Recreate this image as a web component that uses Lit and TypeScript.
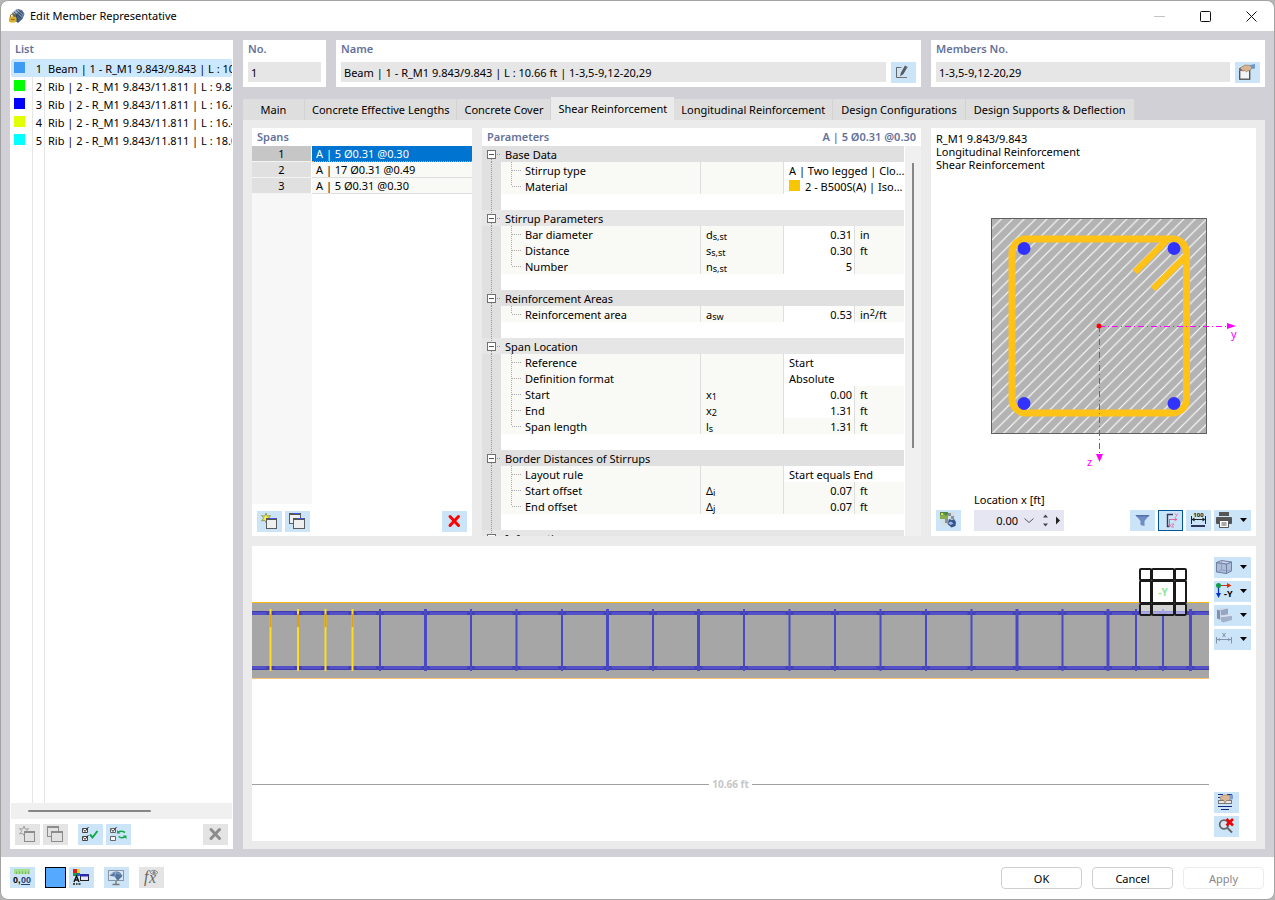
import { LitElement, html, css, svg, nothing } from "lit";
import { customElement, state } from "lit/decorators.js";
import { classMap } from "lit/directives/class-map.js";

interface ListItem { no: number; color: string; text: string; }
interface ParamRow {
  name: string;
  symbol?: string;
  sub?: string;
  value: string;
  unit?: string;
  sup?: string;
  unitTail?: string;
  numeric?: boolean;
  readonly?: boolean;
  swatch?: string;
}
interface ParamGroup { title: string; rows: ParamRow[]; }

const ITEMS: ListItem[] = [
  { no: 1, color: "#3d9af5", text: "Beam | 1 - R_M1 9.843/9.843 | L : 10.66 ft | 1-3,5-9,12-20,29" },
  { no: 2, color: "#00ff00", text: "Rib | 2 - R_M1 9.843/11.811 | L : 9.84 ft" },
  { no: 3, color: "#0000ff", text: "Rib | 2 - R_M1 9.843/11.811 | L : 16.40 ft" },
  { no: 4, color: "#e1ff00", text: "Rib | 2 - R_M1 9.843/11.811 | L : 16.40 ft" },
  { no: 5, color: "#00ffff", text: "Rib | 2 - R_M1 9.843/11.811 | L : 18.04 ft" },
];

const SPANS = ["A | 5 Ø0.31 @0.30", "A | 17 Ø0.31 @0.49", "A | 5 Ø0.31 @0.30"];

const TABS = [
  "Main",
  "Concrete Effective Lengths",
  "Concrete Cover",
  "Shear Reinforcement",
  "Longitudinal Reinforcement",
  "Design Configurations",
  "Design Supports & Deflection",
];

const GROUPS: ParamGroup[] = [
  { title: "Base Data", rows: [
    { name: "Stirrup type", value: "A | Two legged | Clo..." },
    { name: "Material", value: "2 - B500S(A) | Iso...", swatch: "#f7c600" },
  ] },
  { title: "Stirrup Parameters", rows: [
    { name: "Bar diameter", symbol: "d", sub: "s,st", value: "0.31", unit: "in", numeric: true },
    { name: "Distance", symbol: "s", sub: "s,st", value: "0.30", unit: "ft", numeric: true },
    { name: "Number", symbol: "n", sub: "s,st", value: "5", numeric: true },
  ] },
  { title: "Reinforcement Areas", rows: [
    { name: "Reinforcement area", symbol: "a", sub: "sw", value: "0.53", unit: "in", sup: "2", unitTail: "/ft", numeric: true },
  ] },
  { title: "Span Location", rows: [
    { name: "Reference", value: "Start" },
    { name: "Definition format", value: "Absolute" },
    { name: "Start", symbol: "x", sub: "1", value: "0.00", unit: "ft", numeric: true },
    { name: "End", symbol: "x", sub: "2", value: "1.31", unit: "ft", numeric: true },
    { name: "Span length", symbol: "l", sub: "s", value: "1.31", unit: "ft", numeric: true, readonly: true },
  ] },
  { title: "Border Distances of Stirrups", rows: [
    { name: "Layout rule", value: "Start equals End" },
    { name: "Start offset", symbol: "Δ", sub: "i", value: "0.07", unit: "ft", numeric: true, readonly: true },
    { name: "End offset", symbol: "Δ", sub: "j", value: "0.07", unit: "ft", numeric: true, readonly: true },
  ] },
  { title: "Information", rows: [] },
];

const icon = (body: unknown, w = 25, h = 21) =>
  html`<svg class="ico" width=${w} height=${h} viewBox="0 0 ${w} ${h}" aria-hidden="true">${body}</svg>`;

const arrow = svg`<path d="M26 8h7l-3.500 4z" fill="#000"/>`;

const ICONS = {
  fresh: (on: boolean) => svg`
    <path d="M9 2l1.200 3.300 3.300-.8-2 2.700 2.300 2.200-3.300.1L9.300 12 8 9.500l-3.500.3L6.800 7.200 4.500 4.600l3.300.6z"
      fill=${on ? "#f6f24a" : "#e6e6e6"} stroke=${on ? "#8f9648" : "#9a9a9a"} stroke-width=".9"/>
    <rect x="9.500" y="8.500" width="10" height="9" fill=${on ? "#efefef" : "#e2e2e2"} stroke=${on ? "#5c5c5c" : "#8c8c8c"}/>
    <rect x="9" y="7" width="11" height="2" fill=${on ? "#555" : "#8c8c8c"}/>
    ${on ? svg`<rect x="13" y="7" width="6" height="1" fill="#3b56f0"/>` : nothing}`,
  copy: (on: boolean) => svg`
    <rect x="4.500" y="3.500" width="11" height="9" fill=${on ? "#efefef" : "#e2e2e2"} stroke=${on ? "#5c5c5c" : "#8c8c8c"}/>
    <rect x="4" y="2" width="12" height="2" fill=${on ? "#555" : "#8c8c8c"}/>
    ${on ? svg`<rect x="8" y="2" width="7" height="1" fill="#3b56f0"/>` : nothing}
    <rect x="8.500" y="8.500" width="11" height="9" fill=${on ? "#efefef" : "#e2e2e2"} stroke=${on ? "#5c5c5c" : "#8c8c8c"}/>
    <rect x="8" y="7" width="12" height="2" fill=${on ? "#555" : "#8c8c8c"}/>
    ${on ? svg`<rect x="12" y="7" width="7" height="1" fill="#3b56f0"/>` : nothing}`,
  cross: (c: string) => svg`<path d="M8 5.500l8.500 9M16.500 5.500L8 14.500" stroke=${c} stroke-width="3" stroke-linecap="round"/>`,
  checkAll: svg`
    <path d="M4.500 4.500h5v4h-5zM4.500 12.500h5v4h-5z" fill="#fff" stroke="#444"/>
    <path d="M5.500 5.500l1.500 2 3.500-4.500M5.500 13.500l1.500 2 3.500-4.500" fill="none" stroke="#333"/>
    <path d="M12 10.500l2.500 3L19.500 7" fill="none" stroke="#14a84c" stroke-width="2"/>`,
  checkSwap: svg`
    <path d="M4.500 4.500h5v4h-5zM4.500 12.500h5v4h-5z" fill="#f4f8fb" stroke="#666"/>
    <path d="M5.500 5.500l1.500 2 3.500-4.500" fill="none" stroke="#333"/>
    <path d="M12 8.500q3-2.500 7 0M19.500 12.500q-4 2.500-7 0" fill="none" stroke="#14a84c" stroke-width="1.600"/>
    <path d="M11 6v3.500h3.500zM20.500 15v-3.500H17z" fill="#14a84c"/>`,
  edit: svg`
    <path d="M9 5.500H5.500v10H9" fill="none" stroke="#666"/>
    <path d="M9 14.500l1-4L14 3.500l2.500 1.500-4 7z" fill="#5a5a5a"/>
    <path d="M12 15.500h4M8.500 5.500h2M15 5.500h1.500M12 15.500h-3" fill="none" stroke="#777"/>`,
  pick: svg`
    <rect x="4.700" y="7.700" width="10" height="9.500" fill="#f4f4f6" stroke="#4c4c50" stroke-width="1.300"/>
    <path d="M4 6h4v3H4z" fill="#6a6a78"/>
    <path d="M5 6l5-3 6 .5 1 2.500-2 2.500-2 .2-1.500 1.300-1.500-1.500L7 9l-.5-1.500z" fill="#d9b592" stroke="#8a6a4c" stroke-width=".6"/>
    <path d="M15 3l5-1v4.500L16.500 7z" fill="#6f96cc"/>`,
  filter: svg`<path d="M5.500 5h14l-5 6v5l-4 -1v-4z" fill="#6f8cc4"/><path d="M5.500 5h14l-1 1.500h-12z" fill="#5470ab"/>`,
  axes: svg`
    <path d="M15 4.500H9.500v12h2" fill="none" stroke="#2f3560" stroke-width="1.400"/>
    <path d="M11 9.500h8M11.500 9.500v7" fill="none" stroke="#d96aa3"/>
    <path d="M16.500 8l2.500 1.500-2.500 1.500M10 14.500l1.500 2.500 1.500-2.500M17 3.500l1.500 2 1.500-2M18.500 5.500l-1 2M13.500 14h2.500l-2.500 3H16" fill="none" stroke="#d96aa3" stroke-width=".8"/>`,
  dims: svg`
    <text x="12.500" y="7" text-anchor="middle" class="t-dim">100</text>
    <path d="M5.500 6v8M19.500 6v8M5 9.500h15" fill="none" stroke="#222"/>
    <path d="M5.500 9.500l3-2v4zM19.500 9.500l-3-2v4z" fill="#222"/>
    <rect x="5" y="15" width="14" height="2" fill="#2f3560"/>`,
  print: svg`
    <path d="M5 2h10v4H5z" fill="#555"/>
    <rect x="2" y="7" width="16" height="7" rx="1" fill="#555"/>
    <path d="M5.500 10.500h9v7h-9z" fill="#fff" stroke="#555"/>
    <path d="M7.500 13h5M7.500 15h5" stroke="#555"/>${arrow}`,
  render: svg`
    <rect x="4" y="2" width="8" height="7" fill="#4f8a45"/>
    <path d="M4 6l3-3 3 3 2-2v5H4z" fill="#86ad4e"/><rect x="5" y="3" width="2" height="2" fill="#e8d45a"/>
    <path d="M12 2h7v7h-7zM6 9h7v7H6z" fill="#d3dde4"/>
    <path d="M12 3h3v3h-3zM9 9h3v4H9zM15 6h3v3h-3z" fill="#87929d"/>
    <path d="M13 9l3 1 2-1 2 3-.5 4-4 1.500-4-3.500z" fill="#36558c"/><path d="M12 13l3-1.500 2.500 2-3 1.500z" fill="#9db8de"/>`,
  cube: svg`
    <path d="M2.500 5.500l10 1.500v9.500l-10-1.500zM12.500 7l5-2v9l-5 2.500z" fill="#9fabc9" fill-opacity=".7" stroke="#6f7fa5"/>
    <path d="M2.500 5.500l5-2 10 1.500-5 2z" fill="#c9d3e8" stroke="#6f7fa5"/>
    <path d="M7.500 3.500V13l10 1M7.500 13l-5 2" fill="none" stroke="#8593b5" stroke-width=".7"/>${arrow}`,
  viewY: svg`
    <path d="M4.500 4.500h10" stroke="#c33" /><path d="M13 2l4.500 2.500L13 7z" fill="#d0330a"/>
    <path d="M4.500 5v8" stroke="#0033cc" stroke-width="1.300"/><path d="M2 12h5l-2.500 5z" fill="#0033cc"/>
    <circle cx="4.500" cy="4.500" r="2.500" fill="#0f9d4a"/>
    <text x="10" y="16" class="t-view">-Y</text>${arrow}`,
  solids: svg`
    <path d="M3 4.500v9l4 1.500V5.500z" fill="#8190b0"/>
    <path d="M3 4.500l3-1.500 8 .5-3 2-4 .5z" fill="#d0d9e8"/>
    <path d="M6 5.500l8-2v6l-7 1z" fill="#95a4c2"/>
    <path d="M6 10.500l8-1 4 1-9 1.500z" fill="#d0d9e8"/>
    <path d="M7 12l11-1.500V15l-9 2.500-2-1.500z" fill="#a3b0ca"/>
    <path d="M6.500 6v9.500M7 11.500l11-1" stroke="#e4ebf4" stroke-width=".7"/>${arrow}`,
  measure: svg`
    <path d="M2.500 8v6.500M17.500 8v6.500M3 10.500h14" fill="none" stroke="#8393ae"/>
    <path d="M3 10.500l3-1.500v3zM17 10.500l-3-1.500v3z" fill="#8393ae"/>
    <path d="M8.500 4l3 4M11.500 4l-3 4" stroke="#8393ae"/>${arrow}`,
  labels: svg`
    <path d="M4 2.500h5M13 2.500h5M4 5.500h3" stroke="#1a2a88"/>
    <rect x="4.500" y="8.500" width="13" height="3" fill="#e8e8e8" stroke="#777"/>
    <path d="M6 5l4-2h5l2 2.500-2 3h-2.500L11 11 9.500 8 6.500 7.500z" fill="#dcb896" stroke="#9b7654" stroke-width=".6"/>
    <path d="M15 3l4-.5V7l-3 1z" fill="#7d9fd0"/>
    <path d="M4 14.500h14M7 17.500h8" stroke="#1a2a88" stroke-width="1.200"/>`,
  clearZoom: svg`
    <circle cx="10" cy="8.500" r="4.300" fill="#d7e6f2" stroke="#666" stroke-width="1.800"/>
    <path d="M13.500 12l4.500 4.500" stroke="#666" stroke-width="2"/>
    <path d="M12.500 3l6.500 6.500M19 3l-6.500 6.500" stroke="#f00000" stroke-width="2.600"/>`,
  units: svg`
    <rect x="4" y="2" width="16" height="5" fill="#a4e08c"/>
    <path d="M6.500 4.500V7M9.500 4.500V7M12.500 4.500V7M15.500 4.500V7M18.500 4.500V7" stroke="#6fae5a" stroke-width=".8"/>
    <text x="3" y="16" class="t-unit">0,</text><text x="11" y="16" class="t-unit navy">00</text>
    <path d="M11 17.500h9" stroke="#24407c"/>`,
  display: svg`
    <rect x="4" y="2" width="4" height="4" fill="#e02020"/><rect x="8" y="2" width="3" height="4" fill="#f0e000"/>
    <rect x="4" y="6" width="4" height="3" fill="#20a040"/><rect x="8" y="6" width="3" height="3" fill="#2060e0"/>
    <path d="M5 15l2.500-6 2.500 6M6 13h3M4 17h2M7 17h1.500M9.500 17h2" fill="none" stroke="#111" stroke-width="1.400"/>
    <rect x="11.500" y="7.500" width="8" height="6" fill="#e8e8f4" stroke="#222"/><rect x="11" y="7" width="9" height="2.500" fill="#2c2ca8"/>`,
  screen: svg`
    <rect x="4.500" y="3.500" width="15" height="10" fill="#d4e6f4" stroke="#8a97a3"/>
    <path d="M12 14v3M8.500 17.500h7" stroke="#777" stroke-width="1.400"/>
    <path d="M5.500 9q5-7 11-3l2 3-5 5-2.500-4q-2.500-1.500-5.500-1z" fill="#54739f"/>
    <path d="M7 7.500q4.500-3.500 9.500 0M12 5l-1.500 5" fill="none" stroke="#9fb8d8" stroke-width=".8"/>`,
  fx: svg`
    <text x="5" y="15" class="t-fx">f</text><text x="10" y="16" class="t-fx">x</text>
    <path d="M11 5.500q3.500-4.500 8 0q-4 4-8 0z" fill="none" stroke="#888"/>
    <circle cx="15" cy="5.500" r="1.500" fill="#888"/>`,
};

@customElement("app-root")
export class AppRoot extends LitElement {
  @state() private tab = 3;
  @state() private item = 1;
  @state() private span = 0;

  static styles = css`
    :host {
      display: block;
      --ink: #000;
      --head: #64729b;
      --frame: #d1d0d6;
      --pane: #ebebeb;
      --field: #e6e6e6;
      --tool: #cce4f7;
      --off: #e4e4e4;
      --cell: #f9faf5;
      font: 11px/16px "Noto Sans", "Open Sans", sans-serif;
      color: var(--ink);
      background: #b5b5b5;
    }
    * { box-sizing: border-box; }
    button, input { font: inherit; color: inherit; margin: 0; border: 0; padding: 0; }
    h2, p { margin: 0; }
    h2 { font-size: 11px; font-weight: 600; line-height: 18px; color: var(--head); padding: 0 5px; }
    .window {
      height: 100vh; display: flex; flex-direction: column; overflow: hidden;
      border: 1px solid #a3a3a3; border-radius: 8px; background: #fff;
    }
    .title { display: flex; align-items: center; height: 30px; flex: none; padding-left: 8px; }
    .title h1 { font-size: 11px; font-weight: 400; margin: 0 0 0 5px; flex: 1; }
    .title button { width: 46px; height: 30px; background: none; display: grid; place-items: center; }
    .ico { display: block; }
    .body {
      flex: 1; min-height: 0; display: grid; grid-template-columns: 223px minmax(0, 1fr);
      gap: 10px; padding: 9px 9px 8px; background: var(--frame);
    }
    .card { background: #fff; min-width: 0; min-height: 0; display: flex; flex-direction: column; }
    .tool { width: 25px; height: 21px; background: var(--tool); flex: none; display: block; }
    .tool.wide { width: 37px; }
    .tool.on { outline: 1px solid #005499; outline-offset: -1px; }
    .tool:disabled { background: var(--off); }
    .bar { display: flex; gap: 3px; }
    .push { margin-left: auto; }
    .gap { margin-left: 7px; }

    .list { padding: 0 1px; }
    .list h2 { padding: 0 4px 1px; }
    .items {
      flex: 1; margin: 0; padding: 0; list-style: none; overflow: hidden;
      background: linear-gradient(#e6e6e6, #e6e6e6) 21px 0 / 1px 100% no-repeat,
        linear-gradient(#e6e6e6, #e6e6e6) 33px 0 / 1px 100% no-repeat;
    }
    .items button {
      display: grid; grid-template-columns: 21px 13px minmax(0, 1fr); width: 100%; height: 18px; line-height: 20px;
      background: none; text-align: left; white-space: nowrap; border-radius: 2px;
    }
    .items button.sel { background: #cce8ff; }
    .items button span { overflow: hidden; }
    .chip { width: 11px; height: 11px; margin: 3px; }
    .idx { text-align: right; padding-right: 3px; }
    .name { padding-left: 3px; }
    .hscroll { height: 16px; background: #f0f0f0; padding: 7px 17px; }
    .hscroll i { display: block; width: 66%; height: 2px; background: #868686; border-radius: 1px; }
    .list .bar { padding: 5px 4px 4px; }

    .main { display: flex; flex-direction: column; min-width: 0; min-height: 0; }
    .heads { display: grid; grid-template-columns: 83px minmax(0, 585fr) minmax(0, 334fr); gap: 10px; }
    .heads .card { padding: 0 5px 4px; height: 47px; justify-content: space-between; }
    .heads label { font-weight: 600; color: var(--head); line-height: 18px; }
    .field { display: flex; gap: 5px; height: 21px; }
    .field input { flex: 1; min-width: 0; height: 20px; background: var(--field); padding: 1px 3px 0; outline: 0; }

    .tabs { display: flex; align-items: flex-end; height: 23px; margin-top: 10px; flex: none; }
    .tabs button { height: 21px; padding: 0 7px; background: #dedede; border-right: 1px solid #d2d2d2; white-space: nowrap; }
    .tabs button:first-child { min-width: 62px; }
    .tabs button:nth-last-child(-n+2) { padding: 0 8px; }
    .tabs button.sel { height: 23px; background: var(--pane); border: 0; }
    .pane {
      flex: 1; min-height: 0; background: var(--pane); padding: 8px 9px;
      display: grid; grid-template-rows: minmax(0, 408fr) minmax(0, 295fr); gap: 10px;
    }
    .top { display: grid; grid-template-columns: minmax(0, 220fr) minmax(0, 439fr) minmax(0, 325fr); gap: 10px; min-height: 0; }

    table { border-collapse: separate; border-spacing: 0; table-layout: fixed; width: 100%; }
    th, td { padding: 0; font-weight: 400; text-align: left; height: 16px; line-height: 16px; white-space: nowrap; overflow: hidden; }
    .spans .grid { flex: 1; background: linear-gradient(#f7f7f7, #f7f7f7) 0 0 / 60px 100% no-repeat; }
    .spans th { width: 60px; text-align: center; background: #e0e0e0; border-right: 1px solid #fff; border-bottom: 1px solid #f4f4f4; line-height: 15px; }
    .spans td { background: var(--cell); border-bottom: 1px solid #dedede; padding-left: 4px; line-height: 15px; }
    .spans tr.sel th { background: #c6c6c6; }
    .spans tr.sel td { background: #0074d1; color: #fff; border-bottom: 1px dotted #ff9a40; }
    .spans .bar { padding: 7px 5px 4px; }

    .headline { display: flex; justify-content: space-between; }
    .scroller { flex: 1; min-height: 0; display: flex; gap: 1px; }
    .tree { flex: 1; min-width: 0; overflow: hidden; }
    .tree svg { display: block; }
    .tree .gut { background: #e0e0e0; }
    .tree .grp th, .tree .grp td { background: #e0e0e0; }
    .tree .grp.alt th, .tree .grp.alt td { background: #e6e6e6; }
    .tree .grp th { padding-left: 4px; }
    .tree th, .tree .sym, .tree .val, .tree .num, .tree .unit { padding-top: 2px; line-height: 14px; }
    .c-gut { width: 19px; } .c-sym { width: 83px; } .c-val { width: 71px; } .c-unit { width: 49px; }
    .tree .key { background: var(--cell); border-right: 1px solid #dedede; }
    .key span { display: flex; gap: 2px; height: 16px; line-height: 18px; }
    .tree .sym { background: var(--cell); border-right: 1px solid #dedede; padding-left: 5px; }
    .tree .val { padding-left: 5px; }
    .tree .num { text-align: right; padding-right: 2px; border-right: 1px solid #dedede; }
    .tree .ro { background: var(--cell); }
    .tree .unit { background: var(--cell); padding-left: 5px; }
    .mat { display: flex; gap: 5px; }
    .mat i { width: 11px; height: 11px; }
    sub, sup { font-size: 9px; line-height: 0; }
    sub { vertical-align: -1px; }
    sup { vertical-align: 3px; }
    .vscroll { width: 16px; background: #f0f0f0; padding: 17px 7px; }
    .vscroll i { display: block; width: 2px; height: 80%; background: #868686; }

    .info { padding: 4px 5px 0; line-height: 13px; }
    .section { flex: 1; min-height: 0; width: 100%; display: block; }
    .section text { fill: #f0f; font-size: 11px; }
    .controls { display: flex; align-items: flex-end; gap: 3px; padding: 0 5px 5px; }
    .loc { margin-left: 10px; margin-right: auto; }
    .loc label { display: block; line-height: 17px; margin-bottom: 2px; }
    .spin { display: flex; width: 90px; height: 21px; background: #e6e6f2; }
    .spin input { width: 44px; background: none; text-align: right; outline: 0; padding-top: 1px; }
    .spin button { background: none; }

    .viewer { flex-direction: row; gap: 5px; padding-right: 5px; }
    .canvas { flex: 1; min-width: 0; position: relative; display: flex; flex-direction: column; padding-top: 56px; }
    .beam { width: 100%; height: 77px; display: block; }
    .nav { position: absolute; top: 21px; right: 21px; }
    .nav text { fill: #8fe89a; font-size: 10px; font-weight: 700; }
    .span-dim { display: flex; align-items: center; gap: 3px; margin-top: 97px; color: #c6c6c6; font-weight: 700; font-size: 10px; line-height: 16px; }
    .span-dim::before, .span-dim::after { content: ""; flex: 1; height: 1px; background: #a0a0a0; }
    .rail { width: 37px; display: flex; flex-direction: column; gap: 3px; padding: 11px 0 4px; }
    .rail .down { margin-top: auto; }

    .footer { display: flex; align-items: flex-start; height: 42px; flex: none; padding: 10px 10px 0 9px; gap: 10px; }
    .color { width: 21px; height: 21px; background: #55aaff; border: 1px solid #000; }
    .cmd { width: 81px; height: 22px; padding-top: 1px; background: #fff; border: 1px solid #cfcfcf; border-radius: 4px; }
    .cmd:disabled { color: #868686; border-color: #ececec; }

    .t-dim { font-size: 6px; font-weight: 700; fill: #222; }
    .t-view { font-size: 9px; font-weight: 700; }
    .t-unit { font: bold 9px "Liberation Sans", sans-serif; }
    .navy { fill: #24407c; }
    .t-fx { font: italic 16px "Liberation Serif", serif; fill: #666; }
  `;

  private tool(body: unknown, label: string, opts: { wide?: boolean; off?: boolean; cls?: string } = {}) {
    const w = opts.wide ? 37 : 25;
    return html`<button class="tool ${opts.wide ? "wide" : ""} ${opts.cls ?? ""}" aria-label=${label}
      ?disabled=${!!opts.off}>${icon(body, w)}</button>`;
  }

  private listPanel() {
    return html`<section class="card list">
      <h2>List</h2>
      <ul class="items">${ITEMS.map((it) => html`<li>
        <button class=${classMap({ sel: it.no === this.item })} @click=${() => (this.item = it.no)}>
          <i class="chip" style="background:${it.color}"></i><span class="idx">${it.no}</span><span class="name">${it.text}</span>
        </button></li>`)}</ul>
      <div class="hscroll"><i></i></div>
      <div class="bar">
        ${this.tool(ICONS.fresh(false), "New", { off: true })}
        ${this.tool(ICONS.copy(false), "Copy", { off: true })}
        ${this.tool(ICONS.checkAll, "Select all", { cls: "gap" })}
        ${this.tool(ICONS.checkSwap, "Invert selection")}
        ${this.tool(ICONS.cross("#8c8c8c"), "Delete", { off: true, cls: "push" })}
      </div>
    </section>`;
  }

  private heads() {
    return html`<div class="heads">
      <div class="card"><label for="no">No.</label><div class="field"><input id="no" .value=${"1"}></div></div>
      <div class="card"><label for="nm">Name</label><div class="field">
        <input id="nm" .value=${"Beam | 1 - R_M1 9.843/9.843 | L : 10.66 ft | 1-3,5-9,12-20,29"}>${this.tool(ICONS.edit, "Edit name")}</div></div>
      <div class="card"><label for="mem">Members No.</label><div class="field">
        <input id="mem" .value=${"1-3,5-9,12-20,29"}>${this.tool(ICONS.pick, "Pick members")}</div></div>
    </div>`;
  }

  private spansPanel() {
    return html`<section class="card spans">
      <h2>Spans</h2>
      <div class="grid"><table><tbody>${SPANS.map((s, i) => html`
        <tr class=${classMap({ sel: i === this.span })} @click=${() => (this.span = i)}><th scope="row">${i + 1}</th><td>${s}</td></tr>`)}
      </tbody></table></div>
      <div class="bar">
        ${this.tool(ICONS.fresh(true), "New span")}
        ${this.tool(ICONS.copy(true), "Copy span")}
        ${this.tool(ICONS.cross("#ff0000"), "Delete span", { cls: "push" })}
      </div>
    </section>`;
  }

  private gutter(kind: "box" | "line", first = false) {
    return html`<svg width="19" height="16" aria-hidden="true">
      ${kind === "box"
        ? svg`${first ? nothing : svg`<path d="M9.500 0v4" stroke="#999" stroke-dasharray="1 1"/>`}
          <path d="M9.500 13v3M15 8.500h4" stroke="#999" stroke-dasharray="1 1"/>
          <rect x="5.500" y="4.500" width="8" height="8" fill="#fff" stroke="#707070"/><path d="M7 8.500h5" stroke="#555"/>`
        : svg`<path d="M9.500 0v16" stroke="#999" stroke-dasharray="1 1"/>`}
    </svg>`;
  }

  private paramRow(r: ParamRow, last: boolean) {
    return html`<tr>
      <td class="gut">${this.gutter("line")}</td>
      <td class="key"><span><svg width="22" height="16" aria-hidden="true">
        <path d="M10.500 0v${last ? 8 : 16}M11 8.500h10" stroke="#aaa" stroke-dasharray="1 1"/></svg>${r.name}</span></td>
      <td class="sym">${r.symbol ?? ""}${r.sub ? html`<sub>${r.sub}</sub>` : nothing}</td>
      ${r.numeric
        ? html`<td class=${classMap({ num: true, ro: !!r.readonly })}>${r.value}</td>
          <td class="unit">${r.unit ?? ""}${r.sup ? html`<sup>${r.sup}</sup>` : nothing}${r.unitTail ?? ""}</td>`
        : html`<td class="val" colspan="2">${r.swatch
            ? html`<span class="mat"><i style="background:${r.swatch}"></i>${r.value}</span>` : r.value}</td>`}
    </tr>`;
  }

  private paramsPanel() {
    return html`<section class="card">
      <div class="headline"><h2>Parameters</h2><h2>A | 5 Ø0.31 @0.30</h2></div>
      <div class="scroller">
        <div class="tree"><table>
          <colgroup><col class="c-gut"><col><col class="c-sym"><col class="c-val"><col class="c-unit"></colgroup>
          <tbody>${GROUPS.map((g, i) => html`
            <tr class=${classMap({ grp: true, alt: i % 2 === 1 })}><td>${this.gutter("box", i === 0)}</td><th colspan="4">${g.title}</th></tr>
            ${g.rows.map((r, k) => this.paramRow(r, k === g.rows.length - 1))}
            <tr><td class="gut">${this.gutter("line")}</td><td colspan="4"></td></tr>`)}
          </tbody></table></div>
        <div class="vscroll"><i></i></div>
      </div>
    </section>`;
  }

  private sectionPanel() {
    const bars = [[1024, 248.500], [1174, 248.500], [1024, 403.500], [1174, 403.500]];
    return html`<section class="card">
      <div class="info"><p>R_M1 9.843/9.843</p><p>Longitudinal Reinforcement</p><p>Shear Reinforcement</p></div>
      <svg class="section" viewBox="931 171 325 320" role="img" aria-label="Cross-section">
        <defs><pattern id="hatch" width="11.400" height="11.400" patternUnits="userSpaceOnUse" x="991" y="218">
          <path d="M-2 13.400L13.400 -2M-2 2L2 -2M9.400 13.400l4-4" stroke="#fff" stroke-width="1.100"/></pattern></defs>
        <rect x="991" y="218" width="216" height="216" fill="#b3b3b3"/>
        <rect x="991" y="218" width="216" height="216" fill="url(#hatch)"/>
        <rect x="991.500" y="218.500" width="215" height="215" fill="none" stroke="#606060"/>
        <path d="M1186 256L1153 289M1166 241L1135 272" stroke="#ffc216" stroke-width="6.500"/>
        <rect x="1012" y="239" width="174.500" height="174" rx="14" fill="none" stroke="#ffc216" stroke-width="7"/>
        ${bars.map(([x, y]) => svg`<circle cx=${x} cy=${y} r="6.500" fill="#3232ff"/>`)}
        <path d="M1099 326.500h128M1099.500 326v128" fill="none" stroke="#f0f" stroke-dasharray="6 3 1 3"/>
        <path d="M1227 323l9 3-9 3zM1096 454h7l-3.500 8z" fill="#f0f"/>
        <circle cx="1099" cy="326" r="2.500" fill="#f00"/>
        <text x="1231" y="338">y</text><text x="1087" y="466">z</text>
      </svg>
      <div class="controls">
        ${this.tool(ICONS.render, "Rendering")}
        <div class="loc"><label for="loc">Location x [ft]</label>
          <div class="spin"><input id="loc" .value=${"0.00"}>
            <button aria-label="Choose location">${icon(svg`<path d="M6.500 8.500l4.500 4 4.500-4" fill="none" stroke="#555"/>`, 20)}</button>
            <button aria-label="Step">${icon(svg`<path d="M5 7.500l2.500-3 2.500 3zM5 13.500l2.500 3 2.500-3z" fill="#444"/>`, 13)}</button>
            <button aria-label="Next location">${icon(svg`<path d="M5 6.500v8l4-4z" fill="#222"/>`, 13)}</button>
          </div></div>
        ${this.tool(ICONS.filter, "Filter")}
        ${this.tool(ICONS.axes, "Axes", { cls: "on" })}
        ${this.tool(ICONS.dims, "Dimensions")}
        ${this.tool(ICONS.print, "Print", { wide: true })}
      </div>
    </section>`;
  }

  private viewerPanel() {
    const yellow = [18.500, 46, 73.500, 100.500];
    const blue = [...Array.from({ length: 17 }, (_, i) => 128 + i * 45.500), 884, 911, 938.500];
    return html`<section class="card viewer">
      <div class="canvas">
        <svg class="beam" viewBox="0 0 957 77" preserveAspectRatio="none" role="img" aria-label="Beam elevation">
          <rect width="957" height="77" fill="#a6a6a6"/>
          <rect width="957" height="1" fill="#ffb70f"/><rect y="76" width="957" height="1" fill="#ffc473"/>
          <path d="M0 11h957M0 66h957" stroke="#5350c8" stroke-width="4"/>
          <path d="M0 9.500h957M0 67.500h957" stroke="#3f3cb0" stroke-width="1"/>
          ${blue.map((x, i) => svg`<g><path d="M${x - 4} 9v4h8v-4zM${x - 4} 64v4h8v-4z" fill="#4340b8"/>
            <path d="M${x} 7v62" stroke="#4a48c4" stroke-width=${[1, 5, 7, 14, 16, 19].includes(i) ? 3 : 2}/></g>`)}
          ${yellow.map((x) => svg`<path d="M${x - 4} 11h8M${x - 4} 66h8" stroke="#4340b8" stroke-width="4"/>
            <path d="M${x} 7v62" stroke="#ffdc1c" stroke-width="2"/><path d="M${x} 12v13" stroke="#dfa010" stroke-width="2"/>`)}
        </svg>
        <svg class="nav" width="50" height="50" viewBox="0 0 50 50" role="img" aria-label="View cube">
          <rect x="1" y="1" width="48" height="48" fill="#fff" fill-opacity=".5"/>
          <rect x="14" y="14" width="22" height="22" fill="#fff"/>
          <g fill="none" stroke="#1a1a1a" stroke-width="2">
            <rect x="2" y="2" width="11" height="11" rx="1"/><rect x="14" y="2" width="22" height="11" rx="1"/><rect x="37" y="2" width="11" height="11" rx="1"/>
            <rect x="2" y="14" width="11" height="22" rx="1"/><rect x="14" y="14" width="22" height="22" rx="1"/><rect x="37" y="14" width="11" height="22" rx="1"/>
            <rect x="2" y="37" width="11" height="11" rx="1"/><rect x="14" y="37" width="22" height="11" rx="1"/><rect x="37" y="37" width="11" height="11" rx="1"/>
          </g>
          <text x="25" y="29" text-anchor="middle">-Y</text>
        </svg>
        <div class="span-dim">10.66 ft</div>
      </div>
      <div class="rail">
        ${this.tool(ICONS.cube, "Isometric view", { wide: true })}
        ${this.tool(ICONS.viewY, "View in -Y", { wide: true })}
        ${this.tool(ICONS.solids, "Display mode", { wide: true })}
        ${this.tool(ICONS.measure, "Dimension lines", { wide: true })}
        ${this.tool(ICONS.labels, "Labels", { cls: "down" })}
        ${this.tool(ICONS.clearZoom, "Reset zoom")}
      </div>
    </section>`;
  }

  render() {
    return html`<div class="window">
      <header class="title">
        <svg class="ico" width="16" height="16" viewBox="0 0 16 16" aria-hidden="true">
          <path d="M3 5l5-4 5 1 2.500 4-2 5-4.500 4-4-3z" fill="#4a6288"/>
          <path d="M3 5l5-4 4 1-5 4.500z" fill="#a5b8d2"/><path d="M12 2l3 4-2 4-4-4z" fill="#6f88ad"/>
          <path d="M5 4l7 6M7 2.500l6 5M9 1.500l5 4M7 6.500L9 14" stroke="#26374f" stroke-width=".8"/>
          <rect x="0" y="8.500" width="7.500" height="6" rx="2" fill="#d8ae2c"/><path d="M1.500 9V7q2.300-2.500 4.500 0v2M2 11.500h3.500" fill="none" stroke="#8f7014"/>
        </svg>
        <h1>Edit Member Representative</h1>
        <button aria-label="Minimize">${icon(svg`<path d="M0 5.500h11" stroke="#c4c4c4"/>`, 11, 11)}</button>
        <button aria-label="Maximize">${icon(svg`<rect x=".5" y=".5" width="10" height="10" rx="1" fill="none" stroke="#111"/>`, 11, 11)}</button>
        <button aria-label="Close">${icon(svg`<path d="M.5.5l10 10M10.500.5l-10 10" stroke="#111"/>`, 11, 11)}</button>
      </header>
      <div class="body">
        ${this.listPanel()}
        <main class="main">
          ${this.heads()}
          <nav class="tabs" role="tablist">${TABS.map((t, i) => html`
            <button role="tab" aria-selected=${i === this.tab} class=${classMap({ sel: i === this.tab })}
              @click=${() => (this.tab = i)}>${t}</button>`)}</nav>
          <div class="pane">
            <div class="top">${this.spansPanel()}${this.paramsPanel()}${this.sectionPanel()}</div>
            ${this.viewerPanel()}
          </div>
        </main>
      </div>
      <footer class="footer">
        ${this.tool(ICONS.units, "Units")}
        <div class="bar"><button class="color" aria-label="Color"></button>${this.tool(ICONS.display, "Display properties")}</div>
        ${this.tool(ICONS.screen, "Show in model")}
        ${this.tool(ICONS.fx, "Formula", { off: true })}
        <button class="cmd push">OK</button>
        <button class="cmd">Cancel</button>
        <button class="cmd" disabled>Apply</button>
      </footer>
    </div>`;
  }
}
